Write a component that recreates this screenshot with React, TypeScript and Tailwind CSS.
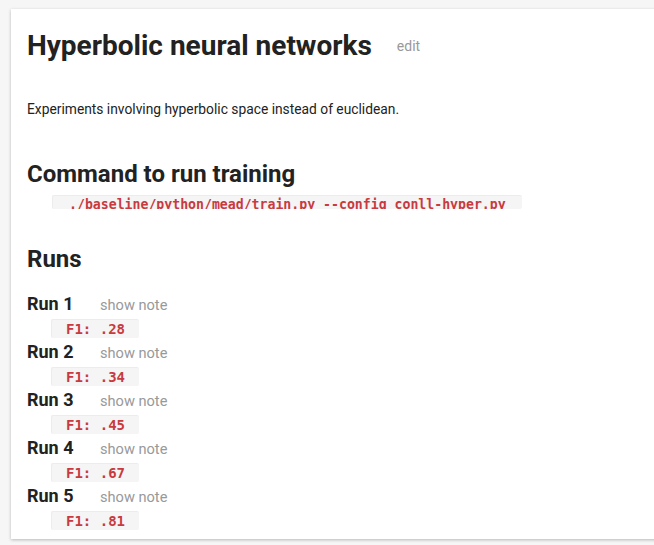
import React from "react";

const runs = [
  { name: "Run 1", f1: ".28" },
  { name: "Run 2", f1: ".34" },
  { name: "Run 3", f1: ".45" },
  { name: "Run 4", f1: ".67" },
  { name: "Run 5", f1: ".81" },
];

export default function App() {
  return (
    <div
      className="min-h-screen w-full overflow-hidden bg-[#f6f6f6] pt-[9px] pl-[11px]"
      style={{ fontFamily: "Roboto, 'Noto Sans', sans-serif" }}
    >
      <div className="w-[680px] bg-white px-4 pt-[19px] pb-[7px] text-[#222] shadow-[0_1px_3px_rgba(0,0,0,0.25)]">
        <div className="flex items-center h-[36px]">
          <h1 className="text-[28px] font-bold leading-[36px] text-[#222]">Hyperbolic neural networks</h1>
          <span className="ml-[25px] text-[14px] text-[#999]">edit</span>
        </div>
        <p className="mt-[35px] text-[13.8px] leading-[20px] text-[#222]">
          Experiments involving hyperbolic space instead of euclidean.
        </p>
        <h2 className="mt-[40px] text-[24px] font-bold leading-[30px]">Command to run training</h2>
        <div className="mt-[6px] ml-[25px] h-[14px] w-[470px] overflow-hidden rounded-[2px] bg-[#f5f5f5] pl-[16px] border-t border-l border-[#ececec]">
          <pre
            className="pt-[1px] text-[13.2px] font-bold leading-[16px] text-[#c83a40]"
            style={{ fontFamily: "'DejaVu Sans Mono', monospace" }}
          >
            ./baseline/python/mead/train.py --config conll-hyper.py
          </pre>
        </div>
        <h2 className="mt-[35px] text-[24px] font-bold leading-[30px]">Runs</h2>
        <div className="mt-[18px] flex flex-col">
          {runs.map((r) => (
            <div key={r.name} className="flex flex-col">
              <div className="flex items-baseline h-[24px]">
                <span className="w-[73px] text-[18px] font-bold leading-[24px]">{r.name}</span>
                <span className="text-[14.6px] leading-[24px] text-[#999]">show note</span>
              </div>
              <div
                className="mt-[3px] mb-[2px] ml-[24px] flex h-[19px] w-[88px] items-center rounded-[2px] border-t border-l border-[#ececec] bg-[#f5f5f5] pl-[14px] text-[14px] font-bold text-[#c83a40]"
                style={{ fontFamily: "'DejaVu Sans Mono', monospace" }}
              >
                F1: {r.f1}
              </div>
            </div>
          ))}
        </div>
      </div>
    </div>
  );
}
